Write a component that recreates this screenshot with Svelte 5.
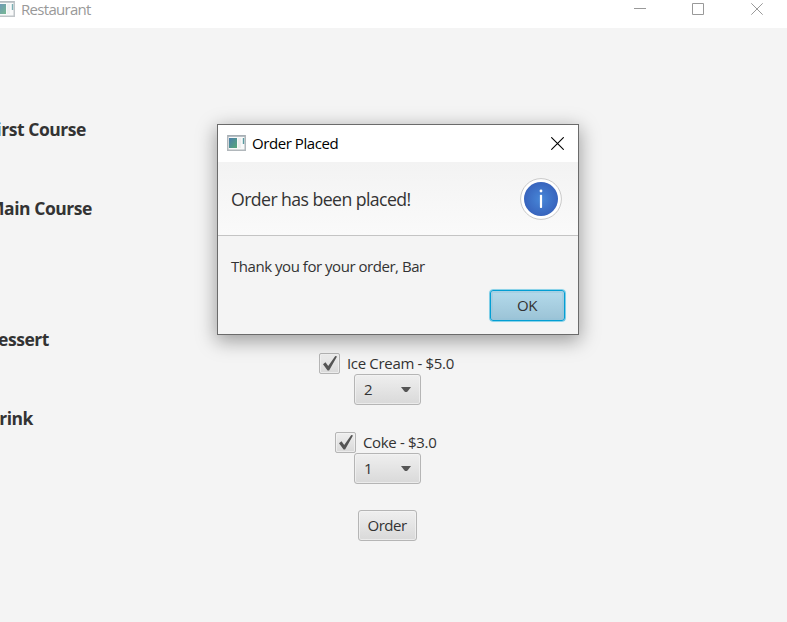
<script>
  const courses = [
    { title: 'First Course', edge: 86, top: 90 },
    { title: 'Main Course', edge: 92, top: 55 },
    { title: 'Dessert', edge: 49, top: 107 },
    { title: 'Drink', edge: 33, top: 55 },
  ];
  const items = [
    { label: 'Ice Cream - $5.0', qty: 2, w: 109 },
    { label: 'Coke - $3.0', qty: 1, w: 77 },
  ];
</script>

{#snippet appIcon()}
  <svg class="app-icon" width="19" height="16" viewBox="0 0 19 16">
    <rect x=".75" y=".75" width="17.5" height="14.5" fill="#f8f9f9" stroke="#b1b7bb" stroke-width="1.5" />
    <path d="M1 1h17" stroke="#9aa4ac" />
    <rect x="2" y="3" width="8" height="10" fill="url(#screen)" />
    <path d="M12.5 3v10" stroke="#eceeee" stroke-width="3" />
    <path d="M16.5 3v6" stroke="#5b9ca2" stroke-width="1.4" />
    <defs>
      <linearGradient id="screen" x1="0" y1="0" x2="1" y2="1">
        <stop offset="0" stop-color="#4a7cac" /><stop offset="1" stop-color="#56a878" />
      </linearGradient>
    </defs>
  </svg>
{/snippet}

<div class="window">
  <header class="titlebar">
    {@render appIcon()}
    <span class="title">Restaurant</span>
    <div class="controls">
      <svg width="13" height="13" viewBox="0 0 13 13"><path d="M1 5.5h12" /></svg>
      <svg width="13" height="13" viewBox="0 0 13 13"><path d="M.5 .5h11v11h-11z" /></svg>
      <svg width="13" height="13" viewBox="0 0 13 13"><path d="M.3 .3l11.4 11.4M11.7 .3L.3 11.7" /></svg>
    </div>
  </header>

  <main>
    <section class="courses">
      {#each courses as c}
        <h2 style="width:{c.edge}px;margin-top:{c.top}px"><span>{c.title}</span></h2>
      {/each}
    </section>
    <section class="order">
      {#each items as item}
        <div class="item">
          <div class="check">
            <span class="box">
              <svg width="15" height="15" viewBox="0 0 15 15"><path d="M0 8.2L2.5 6.3L5.2 10L12.3 0L14 .4L6.1 14.6H4.6Z" fill="#555" /></svg>
            </span>
            <span class="label" style="width:{item.w}px">{item.label}</span>
          </div>
          <div class="combo">
            <span class="qty">{item.qty}</span>
            <svg width="10" height="5" viewBox="0 0 10 5"><path d="M0 0h10L6.5 4.4Q5 5.4 3.5 4.4Z" fill="#555" /></svg>
          </div>
        </div>
      {/each}
      <button class="btn">Order</button>
    </section>
  </main>

  <div class="dialog">
    <div class="dialog-title">
      {@render appIcon()}
      <span class="dt">Order Placed</span>
      <svg class="close" width="13" height="13" viewBox="0 0 13 13"><path d="M.3 .3l12.4 12.4M12.7 .3L.3 12.7" stroke="#000" stroke-width="1.1" /></svg>
    </div>
    <div class="dialog-head">
      <span>Order has been placed!</span>
      <svg width="42" height="42" viewBox="0 0 42 42">
        <defs>
          <radialGradient id="info"><stop offset="0" stop-color="#4787d8" /><stop offset="1" stop-color="#3864bd" /></radialGradient>
        </defs>
        <circle cx="21" cy="21" r="20.4" fill="#fff" stroke="#c9c9c9" />
        <circle cx="21" cy="21" r="17" fill="url(#info)" />
        <circle cx="21" cy="13" r="1.4" fill="#fff" />
        <rect x="19.9" y="16.7" width="2.2" height="13.3" rx=".8" fill="#fff" />
      </svg>
    </div>
    <div class="dialog-body">
      <p>Thank you for your order, Bar</p>
      <button class="btn ok">OK</button>
    </div>
  </div>
</div>

<style>
  :global(body) { background: #f4f4f4; }
  .window {
    position: relative;
    width: 787px;
    height: 622px;
    overflow: hidden;
    background: #f4f4f4;
    color: #333;
    font: 15px/20px "Open Sans", "Noto Sans", sans-serif;
    white-space: nowrap;
  }
  svg { display: block; flex: none; }
  .titlebar {
    display: flex;
    height: 28px;
    background: #fff;
    color: #999;
  }
  .titlebar .app-icon { margin: 1px 0 0 -4px; opacity: .8; }
  .title { margin: -1px 0 0 6px; letter-spacing: -.7px; }
  .controls { display: flex; gap: 46px; margin: 3px 23px 0 auto; }
  .controls svg { fill: none; stroke: #999; }
  main { display: flex; height: 594px; }
  .courses { width: 300px; }
  h2 {
    display: flex;
    justify-content: flex-end;
    height: 24px;
    margin: 0;
    font-size: 17.5px;
    line-height: 22px;
    font-weight: 700;
    letter-spacing: -.45px;
  }
  .order {
    display: flex;
    flex-direction: column;
    align-items: center;
    width: 175px;
    padding-top: 325px;
  }
  .item {
    display: flex;
    flex-direction: column;
    align-items: center;
    margin-bottom: 27px;
  }
  .item + .btn { margin-top: -1px; }
  .check { display: flex; align-items: center; height: 21px; }
  .box, .combo, .btn {
    box-sizing: border-box;
    border: 1px solid #b5b5b5;
    border-radius: 3px;
    background: linear-gradient(#efefef, #d9d9d9);
    box-shadow: inset 0 0 0 1px #f5f5f5aa;
  }
  .box {
    display: flex;
    align-items: center;
    justify-content: flex-end;
    width: 21px;
    height: 21px;
    padding-right: 1px;
    border-radius: 2px;
  }
  .label { padding-bottom: 2px; margin-left: 7px; letter-spacing: -.33px; }
  .combo {
    display: flex;
    align-items: center;
    justify-content: space-between;
    width: 67px;
    height: 31px;
    padding: 0 9px;
  }
  .qty { padding-bottom: 2px; }
  .btn {
    width: 59px;
    height: 31px;
    padding: 0 1px 2px 0;
    color: #333;
    font: inherit;
    letter-spacing: -.5px;
  }
  .dialog {
    position: absolute;
    left: 217px;
    top: 124px;
    box-sizing: border-box;
    width: 362px;
    height: 211px;
    border: 1px solid #6b6b6b;
    background: #f4f4f4;
    box-shadow: 0 5px 18px 1px rgba(0, 0, 0, .36);
  }
  .dialog-title {
    display: flex;
    align-items: center;
    height: 37px;
    padding: 0 14px 0 9px;
    background: #fff;
    color: #000;
  }
  .dialog-title .app-icon { margin-bottom: 2px; }
  .dt { padding-bottom: 2px; margin-left: 6px; letter-spacing: -.43px; }
  .close { margin-left: auto; }
  .dialog-head {
    display: flex;
    align-items: center;
    justify-content: space-between;
    height: 73px;
    padding: 0 16px 0 13px;
    border-bottom: 1px solid #c4c4c4;
    background: linear-gradient(#f3f3f3, #fafafa);
    font-size: 17.7px;
    letter-spacing: -.58px;
  }
  .dialog-body {
    display: flex;
    flex-direction: column;
    padding: 20px 13px 0;
  }
  p { margin: 0; letter-spacing: -.46px; }
  .ok {
    align-self: flex-end;
    width: 75px;
    height: 31px;
    margin-top: 14px;
    border-color: #039ed3;
    background: linear-gradient(#b4daeb, #9bc3d6);
    box-shadow: 0 0 0 .6px #4fbde0, 0 0 1px 1px #c5e6f1, inset 0 0 0 2px #94c4da66;
  }
</style>
